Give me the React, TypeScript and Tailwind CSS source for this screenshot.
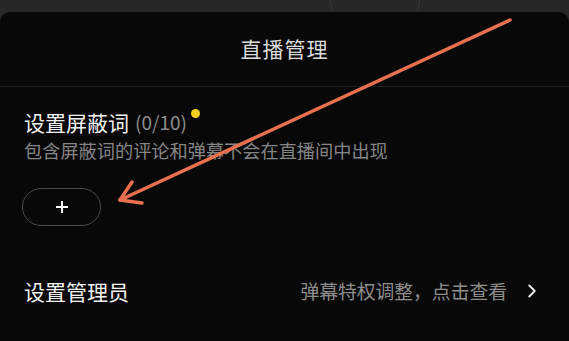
import { ChevronRight } from 'lucide-react'

const FONT = '"Noto Sans CJK SC", "Noto Sans", sans-serif'

// Annotation arrow drawn over the screenshot, pointing at the add button.
function Arrow() {
  return (
    <svg
      className="pointer-events-none absolute inset-0"
      width={569}
      height={341}
      viewBox="0 0 569 341"
      aria-hidden="true"
    >
      <g stroke="#e8704f" strokeWidth={3.5} strokeLinecap="round" fill="none">
        <line x1={510} y1={20} x2={120} y2={200} />
        <line x1={120} y1={200} x2={132} y2={182} />
        <line x1={120} y1={200} x2={142} y2={203} />
      </g>
    </svg>
  )
}

export default function App() {
  return (
    <div
      className="relative h-[341px] w-[569px] overflow-hidden bg-[#272727]"
      style={{ fontFamily: FONT }}
    >
      {/* faint blurred stuff behind the sheet */}
      <div className="absolute left-[330px] top-[-30px] h-[60px] w-[90px] rounded-full border border-[#3a3a3a]" />

      <div className="relative mt-[12px] flex h-[329px] flex-col rounded-t-[10px] bg-[#080808]">
        <div className="flex h-[75px] items-center justify-center border-b border-[#1e1e1e]">
          <span className="text-[21px] tracking-[1px] text-[#dcdcdc]">直播管理</span>
        </div>

        <div className="flex flex-col px-6">
          <div className="mt-[21px] flex items-center">
            <span className="text-[21px] leading-[28px] text-[#f2f2f2]">设置屏蔽词</span>
            <span className="ml-[6px] text-[19px] leading-[28px] text-[#8c8c8c]">(0/10)</span>
            <span className="mb-[18px] ml-[4px] h-[9px] w-[9px] rounded-full bg-[#f5d020]" />
          </div>
          <div className="mt-[1px] text-[18.2px] leading-[26px] text-[#858585]">
            包含屏蔽词的评论和弹幕不会在直播间中出现
          </div>
          <button className="ml-[-2px] mt-[25px] flex h-[38px] w-[79px] items-center justify-center rounded-full border border-[#4a4a4a] text-white">
            <svg width={14} height={14} viewBox="0 0 14 14" aria-hidden="true">
              <path d="M7 1v12M1 7h12" stroke="currentColor" strokeWidth={2} />
            </svg>
          </button>
        </div>

        <div className="mt-[51px] flex items-center px-6">
          <span className="text-[21px] leading-[28px] text-[#f2f2f2]">设置管理员</span>
          <span className="ml-auto text-[18.8px] leading-[28px] text-[#8e8e8e]">
            弹幕特权调整，点击查看
          </span>
          <ChevronRight className="ml-[14px] mr-[2px] h-[22px] w-[22px] text-[#e6e6e6]" strokeWidth={2.2} />
        </div>
      </div>

      <Arrow />
    </div>
  )
}
